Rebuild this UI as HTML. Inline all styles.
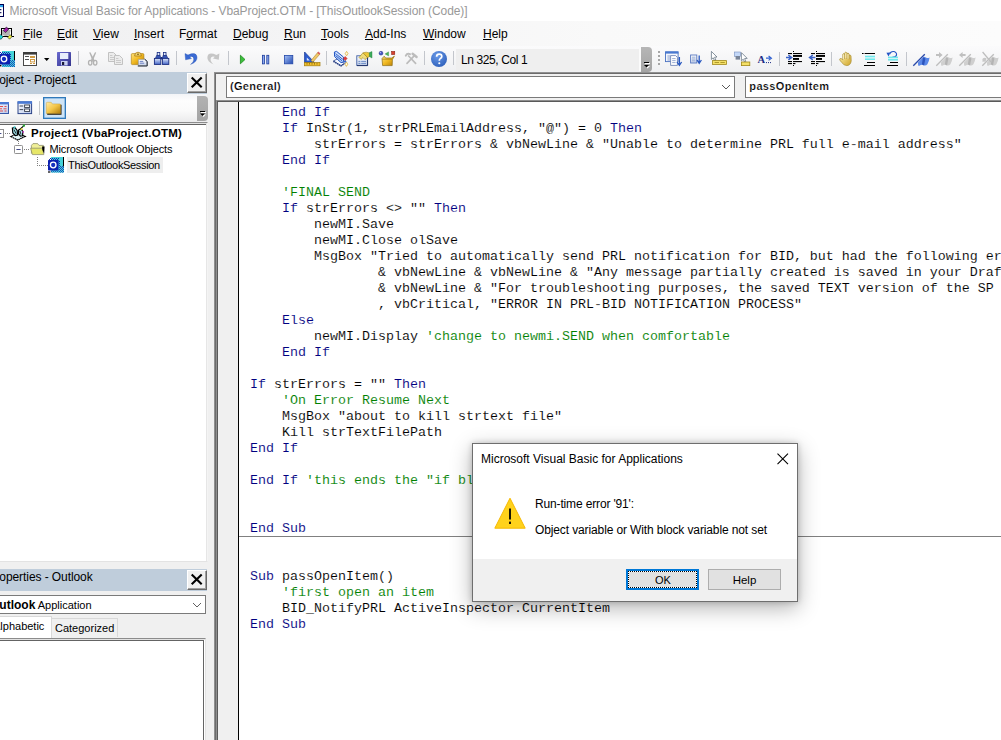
<!DOCTYPE html>
<html>
<head>
<meta charset="utf-8">
<title>Microsoft Visual Basic for Applications</title>
<style>
*{box-sizing:border-box;margin:0;padding:0}
html,body{width:1001px;height:740px;overflow:hidden;background:#f0f0f0;font-family:"Liberation Sans",sans-serif;font-size:12px;color:#000}
.abs,#root div,#root span.p,#root svg{position:absolute}
#root{position:relative;width:1001px;height:740px;overflow:hidden;background:#f0f0f0}
.t{white-space:nowrap;line-height:16px;height:16px}
/* title bar */
#titlebar{left:0;top:0;width:1001px;height:21px;background:#fff}
#title{left:9.5px;top:2.6px;font-size:12px;color:#999;letter-spacing:-0.085px}
/* menu bar */
#menubar{left:0;top:21px;width:1001px;height:25px;background:linear-gradient(to right,#f0f0f1,#f4f4f5 30%,#f9f9f9 60%,#fcfcfc)}
.mi{position:absolute;top:5px;height:16px;line-height:16px;font-size:12px;white-space:nowrap}
.mi u{text-decoration:underline;text-underline-offset:1px}
/* toolbar */
#toolbar{left:0;top:46px;width:1001px;height:26px;background:linear-gradient(#fbfbfc,#f7f7f8 40%,#eff0f2)}
.sep{width:1px;top:5px;height:15px;background:#c3c6ca}
/* panels */
.band{background:#bfcddb}
.xbtn{background:#f0f0f0;border:1px solid;border-color:#fff #696969 #696969 #fff;box-shadow:inset -1px -1px 0 #a0a0a0}
.combo{background:#fff;border:1px solid #7a7a7a}
/* code */
#codewin{left:214px;top:72px;width:800px;height:700px;background:#f0f0f0;border:1px solid #909090;box-shadow:inset 1px 1px 0 #6c6c6c}
#codearea{left:216px;top:100px;width:800px;height:660px;background:#fff;border:1px solid #8e8e8e;box-shadow:inset 1px 1px 0 #5a5a5a}
#margin{left:218px;top:102px;width:20px;height:640px;background:#f0f0f0}
#mline{left:238px;top:102px;width:1px;height:640px;background:#000}
#code{left:239px;top:102px;width:762px;height:638px;background:#fff;overflow:hidden}
#code pre{position:absolute;left:11px;top:3px;font-family:"Liberation Mono",monospace;font-size:13.333px;line-height:16px;color:#000;white-space:pre;-webkit-text-stroke:0.1px #fff}
.k{color:#000080}.c{color:#008000}
#procsep{left:239px;top:536px;width:762px;height:1px;background:#808080}
/* dialog */
#dlg{left:472px;top:443px;width:326px;height:159px;background:#fff;border:1px solid #6e6e6e;box-shadow:0 0 6px rgba(0,0,0,.2),0 6px 20px rgba(0,0,0,.3)}
#dlgfoot{left:0;top:115px;width:324px;height:42px;background:#f0f0f0}
.btn{background:#e1e1e1;border:1px solid #adadad;text-align:center;font-size:12px;line-height:21px}
</style>
</head>
<body>
<div id="root">
<!-- TITLEBAR -->
<div id="titlebar"></div>
<div id="title" class="t">Microsoft Visual Basic for Applications - VbaProject.OTM - [ThisOutlookSession (Code)]</div>
<!-- MENUBAR -->
<div id="menubar">
<span class="mi" style="left:23px"><u>F</u>ile</span>
<span class="mi" style="left:57px"><u>E</u>dit</span>
<span class="mi" style="left:93px"><u>V</u>iew</span>
<span class="mi" style="left:134px"><u>I</u>nsert</span>
<span class="mi" style="left:179px">F<u>o</u>rmat</span>
<span class="mi" style="left:233px"><u>D</u>ebug</span>
<span class="mi" style="left:284px"><u>R</u>un</span>
<span class="mi" style="left:321px"><u>T</u>ools</span>
<span class="mi" style="left:365px"><u>A</u>dd-Ins</span>
<span class="mi" style="left:423px"><u>W</u>indow</span>
<span class="mi" style="left:483px"><u>H</u>elp</span>
</div>
<svg style="left:0;top:0" width="16" height="46" viewBox="0 0 16 46">
<rect x="-8" y="4.5" width="11.5" height="12" fill="#fff" stroke="#00004e" stroke-width="1"/>
<rect x="-8" y="5" width="11" height="2.2" fill="#2ea4f0"/>
<rect x="0" y="9" width="1.4" height="1.2" fill="#28286a"/><rect x="0" y="12" width="1.4" height="1.2" fill="#28286a"/>
<rect x="1.5" y="28.5" width="10" height="8" fill="#fff" stroke="#000" stroke-width="1"/>
<path d="M2 30 L10.6 30 L9.6 34.4 L6 36.6 L2 34.4 Z" fill="#b4b4b4"/>
<path d="M-1 36.5 L14 36.5" stroke="#000" stroke-width="1"/>
<path d="M6.4 27 L8.8 29.2 L5.6 32.6 L3.2 30.4 Z" fill="#a020a8" stroke="#000" stroke-width=".5"/>
<path d="M0.8 34.4 L3.2 36.8 L0.8 39.4 L-1.6 36.8 Z" fill="#20d8d8" stroke="#000" stroke-width=".5"/>
<path d="M10 34.6 L12 36.6 L9.6 39.2 L7.6 37.2 Z" fill="#f0f040" stroke="#000" stroke-width=".5"/>
</svg>
<!-- TOOLBAR -->
<div id="toolbar">
<div style="left:456px;top:3px;width:184px;height:22px;background:#efefef"></div>
<div class="t" style="left:461px;top:6px;font-size:12px;letter-spacing:-0.4px">Ln 325, Col 1</div>
<div style="left:639px;top:3px;width:2px;height:22px;background:#fbfbfb"></div><div style="left:640.5px;top:1px;width:11.5px;height:24.7px;background:linear-gradient(#b6b6b6,#a4a4a4);border-radius:0 4px 4px 0"></div>
<svg style="left:643px;top:15px" width="9" height="9" viewBox="0 0 9 9"><rect x="1" y="1" width="5" height="1" fill="#000"/><rect x="2" y="2" width="5" height="1" fill="#fff"/><path d="M2 5 L7 5 L4.5 7.6 Z" fill="#fff"/><path d="M1 4 L6 4 L3.5 6.6 Z" fill="#000"/></svg>
<div style="left:658px;top:5px;width:2px;height:2px;background:#a6a6a6;box-shadow:0 4px 0 #a6a6a6,0 8px 0 #a6a6a6,0 12px 0 #a6a6a6"></div>
<svg style="left:0;top:0" width="1001" height="26" viewBox="0 46 1001 26">
<defs>
<linearGradient id="gSave" x1="0" y1="0" x2="1" y2="1"><stop offset="0" stop-color="#6a6ad0"/><stop offset="1" stop-color="#32328c"/></linearGradient>
<linearGradient id="gGold" x1="0" y1="0" x2="1" y2="1"><stop offset="0" stop-color="#ffe27a"/><stop offset=".5" stop-color="#f0b820"/><stop offset="1" stop-color="#b07808"/></linearGradient>
<linearGradient id="gBlueV" x1="0" y1="0" x2="0" y2="1"><stop offset="0" stop-color="#dfe8fb"/><stop offset="1" stop-color="#4668c8"/></linearGradient>
<linearGradient id="gStop" x1="0" y1="0" x2="1" y2="1"><stop offset="0" stop-color="#a8c4f8"/><stop offset="1" stop-color="#2048b0"/></linearGradient>
<radialGradient id="gHelp" cx=".4" cy=".3" r=".8"><stop offset="0" stop-color="#6a9ae8"/><stop offset="1" stop-color="#2a5cb8"/></radialGradient>
<linearGradient id="gPaper" x1="0" y1="0" x2="0" y2="1"><stop offset="0" stop-color="#ffffff"/><stop offset="1" stop-color="#c4d0e8"/></linearGradient>
<linearGradient id="gHand" x1="0" y1="0" x2="1" y2="1"><stop offset="0" stop-color="#fff6b8"/><stop offset="1" stop-color="#d0a428"/></linearGradient>
<pattern id="dith" width="2" height="2" patternUnits="userSpaceOnUse"><rect x="0" y="0" width="1" height="1" fill="#1028b4"/><rect x="1" y="1" width="1" height="1" fill="#1028b4"/></pattern>
</defs>
<!-- 1 outlook -->
<g>
<rect x="2" y="51" width="13" height="16" fill="#46d2d8"/>
<rect x="14" y="51" width="1" height="9" fill="#000"/>
<rect x="10" y="60" width="5" height="7" fill="url(#dith)" opacity=".8"/>
<rect x="-1" y="54" width="11" height="10.5" rx=".6" fill="#0c20b0"/>
<rect x="0" y="52" width="10" height="2" fill="url(#dith)"/>
<rect x="10" y="54" width="1" height="6" fill="url(#dith)"/>
<rect x="2" y="64.5" width="8" height="2" fill="url(#dith)" opacity=".7"/>
<rect x="-1" y="65" width="2.4" height="1.4" fill="#000"/>
<circle cx="4" cy="59" r="2.8" fill="#1430c0" stroke="#fff" stroke-width="1.3"/>
</g>
<!-- 2 userform -->
<g>
<rect x="23.5" y="52.5" width="13" height="13" fill="#fff" stroke="#484848" stroke-width="1"/>
<rect x="23" y="52" width="14" height="2.6" fill="#3c3c3c"/>
<rect x="25" y="56" width="4" height="1" fill="#505050"/>
<rect x="25" y="59" width="4" height="1" fill="#505050"/>
<rect x="30" y="56" width="5" height="2" fill="#cf9a45"/>
<rect x="30.5" y="59.5" width="4" height="2.4" fill="#fff" stroke="#cf9a45" stroke-width="1"/>
<rect x="30" y="63" width="2" height="1" fill="#cf9a45"/><rect x="33" y="63" width="2" height="1" fill="#cf9a45"/>
</g>
<path d="M44 58 L49.4 58 L46.7 61 Z" fill="#000"/>
<!-- 4 save -->
<g>
<rect x="57" y="52" width="14" height="14" rx=".6" fill="url(#gSave)"/>
<rect x="60" y="53" width="8.3" height="6" fill="#e8eefc"/>
<rect x="61" y="61" width="6.6" height="4.4" fill="#c8d0f0"/>
<rect x="62" y="62" width="2.2" height="3" fill="#181838"/>
</g>
<rect x="78" y="51" width="1" height="14" fill="#c3c6cc"/>
<!-- 6 cut (grey) -->
<g>
<path d="M89.2 52.4 L90.4 52.2 L95 61 L93 62 Z" fill="#b4b4b4"/>
<path d="M96.2 52.4 L95 52.2 L90.4 61 L92.4 62 Z" fill="#b4b4b4"/>
<ellipse cx="90.2" cy="62.8" rx="1.7" ry="2.4" fill="#f4f4f4" stroke="#b2b2b2" stroke-width="1.3"/>
<ellipse cx="95.2" cy="62.8" rx="1.7" ry="2.4" fill="#f4f4f4" stroke="#b2b2b2" stroke-width="1.3"/>
</g>
<!-- 7 copy (grey) -->
<g stroke="#c2c2c2" stroke-width="1" fill="#ececec">
<path d="M108.5 52.5 L113.5 52.5 L116.5 55.5 L116.5 61.5 L108.5 61.5 Z"/>
<path d="M114.5 55.5 L119.5 55.5 L122.5 58.5 L122.5 64.5 L114.5 64.5 Z"/>
<path d="M110 55.5h2.4M110 57.5h4M110 59.5h4M116 58.5h2.4M116 60.5h5M116 62.5h5" stroke="#c6c6c6" stroke-width=".9"/>
</g>
<!-- 8 paste -->
<g>
<rect x="131.3" y="53.6" width="12.6" height="11" rx="1" fill="url(#gGold)" stroke="#a87808" stroke-width=".6"/>
<path d="M134.6 56 Q134.6 52.2 138 52.2 Q141.4 52.2 141.4 56 Z" fill="#f4d870" stroke="#a07010" stroke-width=".7"/>
<circle cx="138" cy="54.2" r=".8" fill="#604000"/>
<path d="M138.4 59.4 L144.4 59.4 L146.8 61.6 L146.8 65.6 L138.4 65.6 Z" fill="url(#gPaper)" stroke="#9098a8" stroke-width=".6"/>
<path d="M137.8 66 L147.2 66 L147.2 61.4 L144.6 59" fill="none" stroke="#1c2430" stroke-width="1"/>
<path d="M139.8 61.4h3.4M139.8 63.2h4.4" stroke="#5068b8" stroke-width=".8"/>
</g>
<!-- 9 find -->
<g>
<path d="M155.4 58.4 L156.8 55.2 L160 55.2 L160.8 58.4 Z M162.4 58.4 L163.2 55.2 L166.4 55.2 L167.8 58.4 Z" fill="#3858b8" stroke="#182c80" stroke-width=".7"/>
<rect x="157.2" y="52.4" width="2.6" height="3" fill="#dfe8fb" stroke="#182c80" stroke-width=".8"/>
<rect x="163.4" y="52.4" width="2.6" height="3" fill="#dfe8fb" stroke="#182c80" stroke-width=".8"/>
<rect x="154.4" y="58.4" width="6.4" height="6" fill="url(#gBlueV)" stroke="#182c80" stroke-width=".9"/>
<rect x="162.4" y="58.4" width="6.4" height="6" fill="url(#gBlueV)" stroke="#182c80" stroke-width=".9"/>
<rect x="160.8" y="57" width="1.6" height="2.4" fill="#182c80"/>
</g>
<rect x="176" y="51" width="1" height="14" fill="#c3c6cc"/>
<!-- 11 undo -->
<path d="M185 53.6 L185.6 59.8 L191.4 58.6 L189.6 56.8 Q193.6 55.4 193.8 59 Q194 62 190.6 64.4 Q197.6 61.6 197 57 Q196.2 51.4 188 55 Z" fill="#3a6ad4" stroke="#2450b0" stroke-width=".4"/>
<!-- 12 redo grey -->
<path d="M219.4 53.6 L218.8 59.8 L213 58.6 L214.8 56.8 Q210.8 55.4 210.6 59 Q210.4 62 213.8 64.4 Q206.8 61.6 207.4 57 Q208.2 51.4 216.4 55 Z" fill="#c6c6c6"/>
<rect x="228" y="51" width="1" height="14" fill="#c3c6cc"/>
<!-- 14 play -->
<path d="M240.4 55.2 L245 59.5 L240.4 63.8 Z" fill="#3cc03c" stroke="#108010" stroke-width=".7"/>
<!-- 15 pause -->
<rect x="262.4" y="55.3" width="2" height="8.6" fill="#8ca8f0" stroke="#1c3c9c" stroke-width=".8"/>
<rect x="266.8" y="55.3" width="2" height="8.6" fill="#8ca8f0" stroke="#1c3c9c" stroke-width=".8"/>
<!-- 16 stop -->
<rect x="284.4" y="55.4" width="8.4" height="8.4" fill="url(#gStop)" stroke="#2448a8" stroke-width=".8"/>
<!-- 17 design -->
<g>
<path d="M304.6 52 L304.6 62.4 L314.4 62.4 Z" fill="#2c5cd0" stroke="#1a3c98" stroke-width=".8"/>
<path d="M306.8 57.4 L306.8 60.4 L309.8 60.4 Z" fill="#dce8ff"/>
<path d="M311 60.6 L317.6 52.6 L319.6 54.4 L313 62 Z" fill="#f0c868" stroke="#a07820" stroke-width=".5"/>
<path d="M317.2 53 L318.4 51.6 L320.4 53.4 L319.4 54.8 Z" fill="#d86060"/>
<rect x="304.6" y="62.6" width="15.4" height="3.2" fill="#f0c030" stroke="#a07808" stroke-width=".7"/>
<path d="M307 63v1.6M309.5 63v1.6M312 63v1.6M314.5 63v1.6M317 63v1.6" stroke="#705000" stroke-width=".6"/>
</g>
<rect x="326" y="51" width="1" height="14" fill="#c3c6cc"/>
<!-- 19 project explorer -->
<g>
<path d="M333.4 61 L341 65.6 L344.4 63.4 L337 59 Z" fill="#f4f7fd" stroke="#24408c" stroke-width=".8"/>
<path d="M333.4 61.4 L341 66 L344.4 63.8" fill="none" stroke="#1c3278" stroke-width="1.2" stroke-dasharray="1.4 .7"/>
<path d="M334.4 52 L336.6 51.4 L343.4 57 L343.6 61.8 L341 62.6 L334.6 56.6 Z" fill="#bcd4fa" stroke="#2456c4" stroke-width="1"/>
<path d="M335.6 53.6 L342.6 59.2 M335.6 55.6 L342 60.8" stroke="#2456c4" stroke-width=".9"/>
<path d="M336 52.6 L343 58.2" stroke="#eef4ff" stroke-width=".7"/>
<path d="M346.6 51.4 L348 53.6 L346.6 55.8 L345.2 53.6 Z" fill="#fffbe0" stroke="#d8a828" stroke-width=".7"/>
<path d="M346.4 62 L347.8 64.2 L346.4 66.4 L345 64.2 Z" fill="#fffbe0" stroke="#d8a828" stroke-width=".7"/>
<path d="M345 60 L346.6 61.6 L345 63 L343.6 61.6 Z" fill="#3868c8"/>
<path d="M345.2 56.4 L347.2 58.6 L345.2 60.6 L343.2 58.6 Z" fill="#e03c3c" stroke="#a82020" stroke-width=".4"/>
</g>
<!-- 20 properties -->
<g>
<rect x="356.8" y="55.8" width="10.6" height="9.6" fill="url(#gPaper)" stroke="#3c5ca4" stroke-width=".9"/>
<path d="M357 65.6 L367.6 65.6 L367.6 56" fill="none" stroke="#223468" stroke-width="1"/>
<path d="M358.4 61.4h2M361.2 61.4h4.8M358.4 63.4h2M361.2 63.4h4.8" stroke="#6c8cc8" stroke-width="1"/>
<path d="M359 57.4 L363 52.8 L367.4 57.4 L365 59.6 L363 57.6 L361 59.4 Z" fill="#f0dc78" stroke="#a08420" stroke-width=".6"/>
<path d="M363 52.8 Q366 51.4 369.6 53 L369.6 56.4 Q368 57.4 367.4 57.4 Z" fill="#ecc838" stroke="#987818" stroke-width=".5"/>
<path d="M369.4 52.6 L372 51.6 L372 58 L369.4 56.6 Z" fill="#3cac5c" stroke="#207838" stroke-width=".4"/>
</g>
<!-- 21 object browser -->
<g>
<circle cx="381" cy="53.2" r="1.9" fill="#4858c8" stroke="#202878" stroke-width=".5"/>
<circle cx="380.4" cy="52.6" r=".6" fill="#c0c8ff"/>
<path d="M388.6 51.8 L388.6 56 L385 53.9 Z" fill="#48b058" stroke="#288038" stroke-width=".3"/>
<rect x="391.6" y="51.4" width="3.2" height="3.2" fill="#d84030" stroke="#801808" stroke-width=".5"/>
<path d="M382 58.6 L384.2 56.2 L385.6 58 L391.6 58 L394.4 56.2 L392.4 59.4 L392.2 65.6 L382.6 65.6 Z" fill="url(#gGold)" stroke="#8c6c10" stroke-width=".7"/>
<path d="M382.4 59.2 L392.4 59.2" stroke="#8c6c10" stroke-width=".6"/>
</g>
<!-- 22 toolbox grey -->
<g stroke="#bcbcbc" stroke-width="1.7" fill="none" stroke-linecap="round">
<path d="M407 63.4 L414.6 55.4"/><path d="M415.6 63.4 L408.6 56"/>
<path d="M405.8 55.6 Q407.2 53 410 54.2" stroke-width="2"/>
<path d="M412.6 53.8 L416.6 57" stroke-width="2.4"/>
</g>
<rect x="424" y="51" width="1" height="14" fill="#c3c6cc"/>
<!-- 24 help -->
<circle cx="439" cy="59" r="8" fill="url(#gHelp)"/>
<path d="M436.6 56.8 Q436.6 54.2 439.2 54.2 Q441.8 54.2 441.8 56.4 Q441.8 57.8 440.2 58.6 Q439.3 59.2 439.3 60.8" fill="none" stroke="#fff" stroke-width="1.7"/>
<circle cx="439.3" cy="63.3" r="1.05" fill="#fff"/>
<rect x="453" y="51" width="1" height="14" fill="#c3c6cc"/>

<!-- ===== second toolbar ===== -->
<!-- 26 list properties -->
<g>
<rect x="665.5" y="52" width="12.6" height="9.6" fill="#f4f7fd" stroke="#4870c0" stroke-width=".9"/>
<rect x="665.2" y="51.4" width="13.2" height="2.2" fill="#4878d0"/>
<path d="M667.4 56h3M667.4 58h3M667.4 60h3" stroke="#7088c0" stroke-width=".8"/>
<path d="M670.6 55.6 L675.6 55.6 L677.4 57.4 L677.4 65.4 L670.6 65.4 Z" fill="#fff" stroke="#6078b0" stroke-width=".8"/>
<path d="M672.2 58.6h3.4M672.2 60.6h3.4M672.2 62.6h3.4" stroke="#8098c8" stroke-width=".8"/>
<path d="M679.4 57 L679.4 64.6 M677 62 L679.4 65.4 L681.6 62" fill="none" stroke="#2858c0" stroke-width="1.3"/>
</g>
<!-- 27 list constants -->
<g>
<rect x="690.6" y="55" width="6.2" height="8" fill="url(#gPaper)" stroke="#5878c0" stroke-width=".9"/>
<path d="M692 57.2h3.4M692 59h3.4M692 60.8h3.4" stroke="#8098c8" stroke-width=".7"/>
<path d="M699.2 55.4 L699.2 62.6 M697 60 L699.2 63.4 L701.4 60" fill="none" stroke="#2858c0" stroke-width="1.3"/>
</g>
<!-- 28 quick info -->
<g>
<path d="M711.4 51.4 L711.4 59.4 L713.2 57.8 L714.6 60.6 L715.8 60 L714.6 57.2 L717 57 Z" fill="#fff" stroke="#586878" stroke-width=".7"/>
<rect x="712.6" y="60.6" width="14" height="3.8" fill="#f4e068" stroke="#a08818" stroke-width=".8"/>
<path d="M714.6 62.5h4.4M720.4 62.5h4.4" stroke="#a08818" stroke-width=".8"/>
</g>
<!-- 29 param info -->
<g>
<rect x="734.4" y="52" width="6" height="4.4" fill="#c4d8f8" stroke="#7890c0" stroke-width=".6"/>
<rect x="735.6" y="56" width="4.4" height="3.6" fill="#788498"/>
<path d="M741.4 52.6 L741.4 60.8 L743.2 59.2 L744.6 62 L745.8 61.4 L744.6 58.6 L747.2 58.4 Z" fill="#fff" stroke="#586878" stroke-width=".7"/>
<rect x="741.4" y="62" width="8.4" height="3.6" fill="#f4e068" stroke="#a08818" stroke-width=".8"/>
</g>
<!-- 30 complete word -->
<g>
<text x="757.4" y="63" font-family="Liberation Serif" font-weight="bold" font-size="10.5" fill="#1c2c84">A</text>
<path d="M766 58.2 L770.4 58.2 M768.6 56 L771.4 58.2 L768.6 60.4" stroke="#3060d0" stroke-width="1.2" fill="none"/>
<path d="M766 62.6h6" stroke="#1c2c84" stroke-width="1" stroke-dasharray="1 1"/>
</g>
<rect x="779" y="52" width="1" height="14" fill="#c3c6cc"/>
<!-- 32 indent -->
<g fill="#000"><rect x="793" y="51" width="1" height="1"/><rect x="793" y="65" width="1" height="1"/><rect x="788" y="53" width="4" height="1.1"/><rect x="788" y="61" width="4" height="1.1"/><rect x="788" y="63" width="4" height="1.1"/><rect x="793" y="53" width="9" height="1.1"/><rect x="793" y="55" width="9" height="1.9"/><rect x="793" y="58" width="6" height="1.9"/><rect x="793" y="61" width="9" height="1.1"/><rect x="793" y="63" width="2.4" height="1.1"/></g><path d="M786 57.5 L790.6 57.5 M788.4 55.2 L791.6 57.5 L788.4 59.8" stroke="#3a62c8" stroke-width="1.5" fill="none"/>
<!-- 33 outdent -->
<g fill="#000"><rect x="816" y="51" width="1" height="1"/><rect x="816" y="65" width="1" height="1"/><rect x="811" y="53" width="4" height="1.1"/><rect x="811" y="61" width="4" height="1.1"/><rect x="811" y="63" width="4" height="1.1"/><rect x="816" y="53" width="9" height="1.1"/><rect x="816" y="55" width="9" height="1.9"/><rect x="816" y="58" width="6" height="1.9"/><rect x="816" y="61" width="9" height="1.1"/><rect x="816" y="63" width="2.4" height="1.1"/></g><path d="M815.4 57.5 L810.6 57.5 M812.8 55.2 L809.6 57.5 L812.8 59.8" stroke="#3a62c8" stroke-width="1.5" fill="none"/>
<rect x="831" y="52" width="1" height="14" fill="#c3c6cc"/>
<!-- 35 hand -->
<g>
<path d="M842.8 59.6 L842.8 54.2 Q843.6 52.8 844.6 54.2 L844.8 52.8 Q845.8 51.4 846.8 52.8 L847 53.6 Q848 52.4 849 53.8 L849.2 55.2 Q850.4 54.4 851 56 L851.2 61 Q850.6 65.4 846.8 65.6 Q843.8 65.4 841.8 62.6 L839.6 59.8 Q839.6 58.2 841.2 58.6 Z" fill="url(#gHand)" stroke="#a88c30" stroke-width=".7"/>
<path d="M844.7 54v5M846.9 53.6v5.4M849.1 55v4.4" stroke="#a8882c" stroke-width=".7"/>
<path d="M843.6 54.6v4.6M845.8 53.4v5M848 54.2v4.6" stroke="#fffbe0" stroke-width=".7"/>
</g>
<!-- 36 comment block -->
<g>
<path d="M862 53.5h1.6M864.6 53.5h10.4M867 62.5h8M864 65.5h11" stroke="#000" stroke-width="1.1"/>
<rect x="865" y="55.7" width="10" height="1.7" fill="#70e8ec"/><rect x="865" y="58.3" width="10" height="1.7" fill="#70e8ec"/>
<rect x="865" y="57.4" width="10" height=".9" fill="#c8f6f8"/>
</g>
<!-- 37 uncomment -->
<g>
<path d="M889.8 54.2 A3.4 2.7 0 1 1 892.6 56.9" fill="none" stroke="#2454c4" stroke-width="1.1"/>
<path d="M886.4 52.8 L890.2 52.6 L888.6 56.4 Z" fill="#2454c4"/>
<rect x="888" y="56.6" width="10" height="1.6" fill="#70e8ec"/><rect x="888" y="59" width="10" height="1.6" fill="#70e8ec"/>
<rect x="888" y="58.2" width="10" height=".8" fill="#c8f6f8"/>
<path d="M890 62.5h8M887 65.5h11" stroke="#000" stroke-width="1.1"/>
</g>
<rect x="906" y="52" width="1" height="14" fill="#c3c6cc"/>
<!-- 39 bookmark -->
<g transform="translate(0 0)">
<path d="M913.3 65.8 L924.8 54.2" stroke="#2848a8" stroke-width="1.3"/>
<path d="M918 62.6 L922 58.2 Q923.8 55.8 925.4 57.2 Q927 58.6 929.6 57.4 Q929.2 60.6 927.4 64.2 Q925.6 66.4 923.6 65.2 Q921.6 64 919.8 65.6 Q917.8 67 918 62.6 Z" fill="#5a88e8"/>
<path d="M923 57.6 Q924.6 57.4 925.4 58.8 L924 65.4 Q923 64.6 921.8 64.6 Z" fill="#2c54bc"/>
</g>
<g transform="translate(23 0)">
<path d="M913.3 65.8 L924.8 54.2" stroke="#bdbdbd" stroke-width="1.3"/>
<path d="M918 62.6 L922 58.2 Q923.8 55.8 925.4 57.2 Q927 58.6 929.6 57.4 Q929.2 60.6 927.4 64.2 Q925.6 66.4 923.6 65.2 Q921.6 64 919.8 65.6 Q917.8 67 918 62.6 Z" fill="#cfcfcf"/>
<path d="M923 57.6 Q924.6 57.4 925.4 58.8 L924 65.4 Q923 64.6 921.8 64.6 Z" fill="#b4b4b4"/>
<path d="M913 54 L916 54 L916 52 L919.6 55 L916 58 L916 56 L913 56 Z" fill="#c0c0c0"/></g>
<g transform="translate(46 0)">
<path d="M913.3 65.8 L924.8 54.2" stroke="#bdbdbd" stroke-width="1.3"/>
<path d="M918 62.6 L922 58.2 Q923.8 55.8 925.4 57.2 Q927 58.6 929.6 57.4 Q929.2 60.6 927.4 64.2 Q925.6 66.4 923.6 65.2 Q921.6 64 919.8 65.6 Q917.8 67 918 62.6 Z" fill="#cfcfcf"/>
<path d="M923 57.6 Q924.6 57.4 925.4 58.8 L924 65.4 Q923 64.6 921.8 64.6 Z" fill="#b4b4b4"/>
<path d="M919.6 54 L916.6 54 L916.6 52 L913 55 L916.6 58 L916.6 56 L919.6 56 Z" fill="#c0c0c0"/></g>
<g transform="translate(69 0)">
<path d="M913.3 65.8 L924.8 54.2" stroke="#bdbdbd" stroke-width="1.3"/>
<path d="M918 62.6 L922 58.2 Q923.8 55.8 925.4 57.2 Q927 58.6 929.6 57.4 Q929.2 60.6 927.4 64.2 Q925.6 66.4 923.6 65.2 Q921.6 64 919.8 65.6 Q917.8 67 918 62.6 Z" fill="#cfcfcf"/>
<path d="M923 57.6 Q924.6 57.4 925.4 58.8 L924 65.4 Q923 64.6 921.8 64.6 Z" fill="#b4b4b4"/>
<path d="M913.6 52 L922 62" stroke="#bdbdbd" stroke-width="1.2"/><path d="M913.4 59 Q915.4 57 917.6 58.4 L916.4 62 Q915 61.2 913.6 62 Z" fill="#c8c8c8"/></g>
</svg>

</div>

<!-- PROJECT PANEL -->
<div class="band" style="left:0;top:72px;width:207px;height:22px"></div>
<div class="t" style="left:-12.5px;top:72px;font-size:12px;letter-spacing:-0.15px">Project - Project1</div>
<div class="xbtn" style="left:187px;top:73px;width:20px;height:20px"><svg style="left:2px;top:2px" width="14" height="14" viewBox="0 0 14 14"><path d="M1.7 1.5 L11.7 11.3 M11.7 1.5 L1.7 11.3" stroke="#000" stroke-width="2.1" fill="none"/></svg></div>
<div style="left:0;top:94px;width:207px;height:28px;background:linear-gradient(#f3f4f7,#fdfdfd 25%,#fafafa 60%,#ebebec)"></div>
<div style="left:197px;top:96px;width:10.7px;height:24.5px;background:linear-gradient(#b2b2b2,#a4a4a4);border-radius:0 4px 4px 0"></div>
<svg style="left:199px;top:110px" width="9" height="9" viewBox="0 0 9 9"><rect x="1" y="1" width="5" height="1" fill="#000"/><rect x="2" y="2" width="5" height="1" fill="#fff"/><path d="M2 4.5 L7 4.5 L4.5 7.1 Z" fill="#fff"/><path d="M1 3.5 L6 3.5 L3.5 6.1 Z" fill="#000"/></svg>
<div style="left:39px;top:101px;width:1px;height:14px;background:#c3c6ca"></div>
<div style="left:43px;top:97px;width:23px;height:22px;background:#cfe4f6;border:1px solid #3079ba;box-shadow:inset 0 0 0 .5px #5b9bd5"></div>
<!-- tree -->
<div style="left:-2px;top:122px;width:210px;height:440px;background:#fff;border:1px solid;border-color:#8c8c8c #f4f4f4 #e3e3e3 #8c8c8c;box-shadow:inset 0 1px 0 #e3e3e3,inset -1px 0 0 #e6e6e6"></div>
<div style="left:0;top:124px;width:206px;height:1px;background:#646464"></div>
<div style="left:66.5px;top:157px;width:96.5px;height:15.6px;background:#eeeeee"></div>
<div class="t" style="left:31px;top:125px;font-size:11.5px;font-weight:bold;letter-spacing:0.24px">Project1 (VbaProject.OTM)</div>
<div class="t" style="left:49.5px;top:141px;font-size:11px;letter-spacing:-0.12px">Microsoft Outlook Objects</div>
<div class="t" style="left:68px;top:157px;font-size:11px;letter-spacing:-0.33px">ThisOutlookSession</div>

<svg style="left:0;top:94px" width="207" height="90" viewBox="0 94 207 90">
<defs>
<linearGradient id="gFold" x1="0" y1="0" x2="1" y2="1"><stop offset="0" stop-color="#ffeaa4"/><stop offset=".5" stop-color="#f4c648"/><stop offset="1" stop-color="#b07c0c"/></linearGradient>
<linearGradient id="gWin" x1="0" y1="0" x2="1" y2="1"><stop offset="0" stop-color="#ffffff"/><stop offset="1" stop-color="#b8c8ec"/></linearGradient>
<pattern id="dith2" width="2" height="2" patternUnits="userSpaceOnUse"><rect x="0" y="0" width="1" height="1" fill="#1028b4"/><rect x="1" y="1" width="1" height="1" fill="#1028b4"/></pattern>
</defs>
<!-- view code (cut) -->
<rect x="-6" y="102.5" width="14.5" height="11" fill="url(#gWin)" stroke="#3858a8" stroke-width="1"/>
<rect x="-6" y="102" width="15" height="2.4" fill="#4a7ad4"/>
<path d="M0 106.5h3M4.5 106.5h2M0 108.8h2M3.5 108.8h3M0 111h3M4.5 111h2" stroke="#e05050" stroke-width="1"/>
<!-- view object -->
<rect x="18" y="102" width="13.6" height="11.6" fill="url(#gWin)" stroke="#2c4488" stroke-width="1"/>
<rect x="17.6" y="101.2" width="14.4" height="2.6" fill="#4a7ad4"/>
<path d="M19.6 106h3.6M19.6 109.6h3.6" stroke="#404858" stroke-width="1"/>
<rect x="24.6" y="105" width="5" height="2.4" fill="#fff" stroke="#303848" stroke-width=".9"/>
<rect x="24.6" y="109" width="5" height="2.4" fill="#fff" stroke="#303848" stroke-width=".9"/>
<!-- folder -->
<path d="M47.2 114.7 L47.2 104 L61.5 104.8 L61.5 114.7 Z" fill="#1c1404"/>
<path d="M46.3 113.5 L46.3 103.3 Q46.3 102.3 47.3 102.3 L51.2 102.3 L52.4 103.9 L59.6 103.9 Q60.5 103.9 60.5 104.9 L60.5 113.5 Z" fill="url(#gFold)" stroke="#c8a040" stroke-width=".5"/>
<!-- tree row 1 -->
<rect x="-4.5" y="129.5" width="8" height="8" fill="#fff" stroke="#919191"/>
<path d="M-2 133.5h3.4" stroke="#404888" stroke-width="1"/>
<path d="M5 133.5h5" stroke="#808080" stroke-width="1" stroke-dasharray="1 1"/>
<path d="M18.5 141v4" stroke="#808080" stroke-width="1" stroke-dasharray="1 1"/>
<g>
<path d="M10.8 136.6 L17.8 140 L25.2 136.4 L18 133.2 Z" fill="#e4f8fa" stroke="#000" stroke-width="1.2" stroke-dasharray="1.6 .5"/>
<path d="M12.4 128 L14.8 127.4 L17.2 130.4 L17.6 135 L15.4 135.6 L12.8 133 Z" fill="#9ee0e8" stroke="#000" stroke-width="1.2"/>
<path d="M18.6 130 L21 128.6 L22.8 131.4 L22.6 135.8 L20.4 136.2 L18.6 134 Z" fill="#b0e8f0" stroke="#000" stroke-width="1.2"/>
<path d="M14 129.6 L16 133.6 M20 131 L21 134.6" stroke="#000" stroke-width=".8"/>
<path d="M20.4 129 L23.6 125.8" stroke="#000" stroke-width="1.1"/>
<rect x="22.8" y="124.6" width="2.2" height="2" fill="#28a838"/>
<rect x="20.6" y="128.2" width="1.8" height="1.8" fill="#e8d838"/>
<rect x="22.4" y="131" width="1.6" height="1.8" fill="#c048c0"/>
<rect x="13.6" y="126.4" width="1.8" height="1.6" fill="#38c8c8"/>
</g>
<!-- tree row 2 -->
<rect x="14.5" y="145.5" width="8" height="8" rx=".8" fill="#fff" stroke="#919191"/>
<path d="M16.4 149.5h4.2" stroke="#404888" stroke-width="1"/>
<path d="M24 149.5h6" stroke="#808080" stroke-width="1" stroke-dasharray="1 1"/>
<g>
<path d="M31.4 153.6 L31.4 145.4 L33 143.6 L37.6 143.6 L39 145.4 L43.4 145.4 L43.4 147" fill="#f0f098" stroke="#90906c" stroke-width=".8"/>
<path d="M30.6 148.2 L32.4 154.6 L43.8 154.6 L42.6 148.2 Z" fill="#e6e668" stroke="#90906c" stroke-width=".8"/>
<path d="M42 146.4 L44.6 146.4 L44.2 153.4 L42.4 150 Z" fill="#000"/>
</g>
<path d="M37.5 157v8" stroke="#808080" stroke-width="1" stroke-dasharray="1 1"/>
<path d="M37 165.5h11" stroke="#808080" stroke-width="1" stroke-dasharray="1 1"/>
<!-- tree row 3 outlook icon -->
<g>
<rect x="51" y="157" width="13" height="15.6" fill="#46d2d8"/>
<rect x="63" y="157" width="1" height="9.4" fill="#000"/>
<rect x="59" y="166" width="5" height="6.6" fill="url(#dith2)" opacity=".8"/>
<rect x="48" y="160" width="10.6" height="10.4" rx=".6" fill="#0c20b0"/>
<rect x="49" y="158" width="10" height="2" fill="url(#dith2)"/>
<rect x="58.6" y="160" width="1.4" height="6" fill="url(#dith2)"/>
<rect x="51" y="170.4" width="8" height="2" fill="url(#dith2)" opacity=".7"/>
<rect x="48" y="171.4" width="2.4" height="1.2" fill="#000"/>
<circle cx="53.2" cy="165" r="2.8" fill="#1430c0" stroke="#fff" stroke-width="1.3"/>
</g>
</svg>


<!-- PROPERTIES PANEL -->
<div class="band" style="left:0;top:569px;width:207px;height:22px"></div>
<div class="t" style="left:-12.5px;top:569px;font-size:12px;letter-spacing:-0.08px">Properties - Outlook</div>
<div class="xbtn" style="left:187px;top:570px;width:20px;height:20px"><svg style="left:2px;top:2px" width="14" height="14" viewBox="0 0 14 14"><path d="M1.7 1.5 L11.7 11.3 M11.7 1.5 L1.7 11.3" stroke="#000" stroke-width="2.1" fill="none"/></svg></div>
<div class="combo" style="left:-2px;top:595px;width:208px;height:19px"></div>
<div class="t" style="left:-10px;top:597px;font-size:11px"><b style="font-size:12px">Outlook</b> Application</div>
<svg style="left:192px;top:602px" width="10" height="7" viewBox="0 0 10 7"><path d="M1 1 L5 5 L9 1" stroke="#606060" stroke-width="1" fill="none"/></svg>
<!-- tabs -->
<div style="left:-2px;top:616px;width:54px;height:23px;background:#fff;border:1px solid #d9d9d9;border-bottom:0"></div>
<div style="left:51px;top:618px;width:67px;height:19px;background:#f0f0f0;border:1px solid #d9d9d9;border-bottom:0"></div>
<div class="t" style="left:-7px;top:618px;font-size:11px">Alphabetic</div>
<div class="t" style="left:55px;top:620px;font-size:11px">Categorized</div>
<div style="left:-2px;top:638px;width:208px;height:110px;background:#fff;border:1px solid;border-color:#8c8c8c #e3e3e3 #e3e3e3 #8c8c8c;box-shadow:inset 0 1px 0 #e3e3e3"></div>
<div style="left:0;top:640px;width:204px;height:110px;background:#fff;border-top:1px solid #646464;border-right:1px solid #646464"></div>

<!-- CODE WINDOW -->
<div id="codewin"></div>
<div class="combo" style="left:226px;top:76px;width:509px;height:22px"></div>
<div class="t" style="left:230px;top:78px;font-size:11px;font-weight:bold;letter-spacing:0.3px;-webkit-text-stroke:0.2px #fff">(General)</div>
<svg style="left:721px;top:84px" width="10" height="7" viewBox="0 0 10 7"><path d="M1 1 L5 5 L9 1" stroke="#585858" stroke-width="1" fill="none"/></svg>
<div class="combo" style="left:745px;top:76px;width:300px;height:22px"></div>
<div class="t" style="left:749.3px;top:78px;font-size:11px;font-weight:bold;letter-spacing:0.36px;-webkit-text-stroke:0.2px #fff">passOpenItem</div>
<div id="codearea"></div>
<div id="margin"></div>
<div id="mline"></div>
<div id="code"><pre>    <span class="k">End If</span>
    <span class="k">If</span> InStr(1, strPRLEmailAddress, "@") = 0 <span class="k">Then</span>
        strErrors = strErrors &amp; vbNewLine &amp; "Unable to determine PRL full e-mail address"
    <span class="k">End If</span>

    <span class="c">'FINAL SEND</span>
    <span class="k">If</span> strErrors &lt;&gt; "" <span class="k">Then</span>
        newMI.Save
        newMI.Close olSave
        MsgBox "Tried to automatically send PRL notification for BID, but had the following errors: " _
                &amp; vbNewLine &amp; vbNewLine &amp; "Any message partially created is saved in your Drafts folder" _
                &amp; vbNewLine &amp; "For troubleshooting purposes, the saved TEXT version of the SP item is at " _
                , vbCritical, "ERROR IN PRL-BID NOTIFICATION PROCESS"
    <span class="k">Else</span>
        newMI.Display <span class="c">'change to newmi.SEND when comfortable</span>
    <span class="k">End If</span>

<span class="k">If</span> strErrors = "" <span class="k">Then</span>
    <span class="c">'On Error Resume Next</span>
    MsgBox "about to kill strtext file"
    Kill strTextFilePath
<span class="k">End If</span>

<span class="k">End If</span> <span class="c">'this ends the "if block" started above</span>


<span class="k">End Sub</span>


<span class="k">Sub</span> passOpenItem()
    <span class="c">'first open an item</span>
    BID_NotifyPRL ActiveInspector.CurrentItem
<span class="k">End Sub</span></pre></div>
<div id="procsep"></div>

<!-- DIALOG -->
<div id="dlg">
<div class="t" style="left:8px;top:7px;font-size:12px">Microsoft Visual Basic for Applications</div>
<svg style="left:303px;top:8px" width="13" height="13" viewBox="0 0 13 13"><path d="M1.5 1.7 L12 12.2 M12 1.7 L1.5 12.2" stroke="#000" stroke-width="1.1" fill="none"/></svg>
<div id="dlgfoot"></div>
<svg style="left:21px;top:53px" width="32" height="33" viewBox="0 0 32 33"><path d="M16 1.2 L31.2 31.2 L0.8 31.2 Z" fill="#ffd21c" stroke="#f5b800" stroke-width="1" stroke-linejoin="round"/><rect x="15.1" y="11.5" width="1.8" height="11" fill="#000"/><rect x="15.1" y="24.6" width="1.8" height="2.4" fill="#000"/></svg>
<div class="t" style="left:62px;top:52px;font-size:12px;letter-spacing:-0.15px">Run-time error '91':</div>
<div class="t" style="left:62px;top:78px;font-size:12px;letter-spacing:-0.12px">Object variable or With block variable not set</div>
<div class="btn" style="left:153px;top:125px;width:73px;height:21px;border:2px solid #0078d7;line-height:19px;font-size:11px;padding-left:1px">OK<div style="left:0;top:0;width:69px;height:17px;border:1px solid #fff"><div style="left:-1px;top:-1px;width:69px;height:17px;border:1px dotted #000"></div></div></div>
<div class="btn" style="left:235px;top:125px;width:73px;height:21px;font-size:11.5px">Help</div>
</div>
</div>
</body>
</html>
